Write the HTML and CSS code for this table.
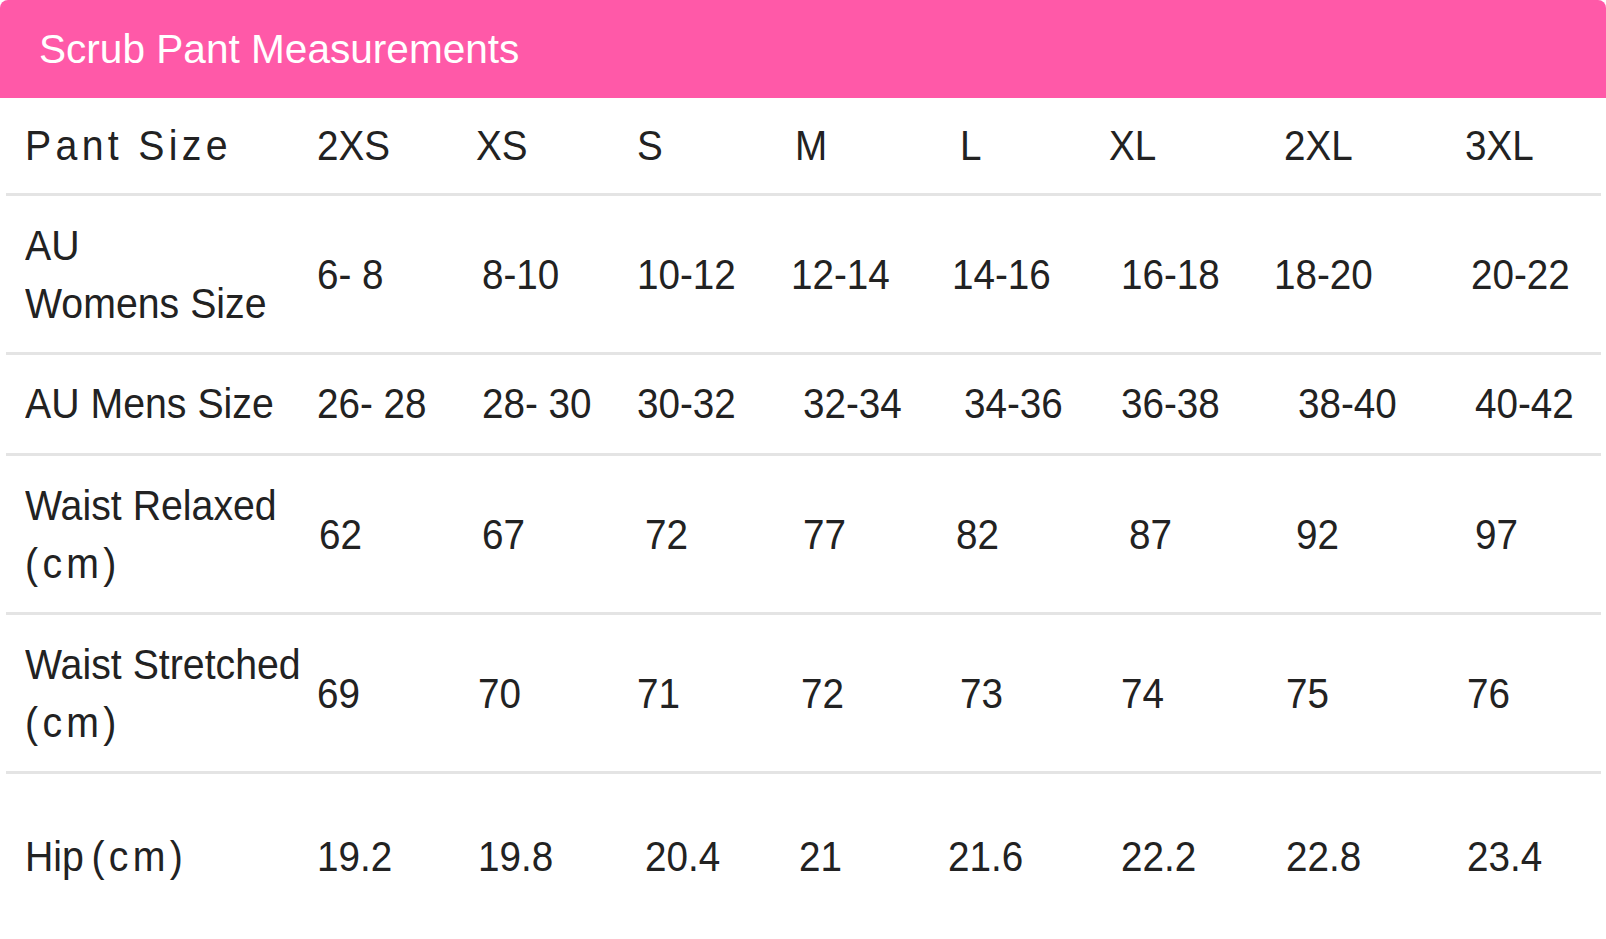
FILE: index.html
```html
<!DOCTYPE html>
<html lang="en">
<head>
<meta charset="utf-8">
<title>Scrub Pant Measurements</title>
<link rel="stylesheet" href="styles.css">
</head>
<body>
<div class="card">
  <div class="title">Scrub Pant Measurements</div>
  <div class="tbl">
    <div class="row head">
      <div class="lab"><span class="t ls">Pant Size</span></div>
      <div class="c"><span class="t">2XS</span></div>
      <div class="c"><span class="t n2">XS</span></div>
      <div class="c"><span class="t">S</span></div>
      <div class="c"><span class="t">M</span></div>
      <div class="c"><span class="t m4">L</span></div>
      <div class="c"><span class="t n2">XL</span></div>
      <div class="c"><span class="t n2">2XL</span></div>
      <div class="c"><span class="t n2">3XL</span></div>
    </div>
    <div class="row two">
      <div class="lab"><span class="t">AU<br>Womens Size</span></div>
      <div class="c"><span class="t">6- 8</span></div>
      <div class="c"><span class="t m4">8-10</span></div>
      <div class="c"><span class="t">10-12</span></div>
      <div class="c"><span class="t n4">12-14</span></div>
      <div class="c"><span class="t n4">14-16</span></div>
      <div class="c"><span class="t m10">16-18</span></div>
      <div class="c"><span class="t n12">18-20</span></div>
      <div class="c"><span class="t m4">20-22</span></div>
    </div>
    <div class="row">
      <div class="lab"><span class="t">AU Mens Size</span></div>
      <div class="c"><span class="t">26- 28</span></div>
      <div class="c"><span class="t m4">28- 30</span></div>
      <div class="c"><span class="t">30-32</span></div>
      <div class="c"><span class="t m8">32-34</span></div>
      <div class="c"><span class="t m8">34-36</span></div>
      <div class="c"><span class="t m10">36-38</span></div>
      <div class="c"><span class="t m12">38-40</span></div>
      <div class="c"><span class="t m8">40-42</span></div>
    </div>
    <div class="row two">
      <div class="lab"><span class="t">Waist Relaxed<br><span class="ls">(cm)</span></span></div>
      <div class="c"><span class="t m2">62</span></div>
      <div class="c"><span class="t m4">67</span></div>
      <div class="c"><span class="t m8">72</span></div>
      <div class="c"><span class="t m8">77</span></div>
      <div class="c"><span class="t">82</span></div>
      <div class="c"><span class="t m18">87</span></div>
      <div class="c"><span class="t m10">92</span></div>
      <div class="c"><span class="t m8">97</span></div>
    </div>
    <div class="row two">
      <div class="lab"><span class="t">Waist Stretched<br><span class="ls">(cm)</span></span></div>
      <div class="c"><span class="t">69</span></div>
      <div class="c"><span class="t">70</span></div>
      <div class="c"><span class="t">71</span></div>
      <div class="c"><span class="t m6">72</span></div>
      <div class="c"><span class="t m4">73</span></div>
      <div class="c"><span class="t m10">74</span></div>
      <div class="c"><span class="t">75</span></div>
      <div class="c"><span class="t">76</span></div>
    </div>
    <div class="row hip">
      <div class="lab"><span class="t">Hip<span class="ls gap">(cm)</span></span></div>
      <div class="c"><span class="t">19.2</span></div>
      <div class="c"><span class="t">19.8</span></div>
      <div class="c"><span class="t m8">20.4</span></div>
      <div class="c"><span class="t m4">21</span></div>
      <div class="c"><span class="t n8">21.6</span></div>
      <div class="c"><span class="t m10">22.2</span></div>
      <div class="c"><span class="t">22.8</span></div>
      <div class="c"><span class="t">23.4</span></div>
    </div>
  </div>
</div>
</body>
</html>
```
FILE: styles.css
```css
html, body {
  margin: 0;
  padding: 0;
  background: #ffffff;
}

body {
  font-family: "Liberation Sans", Arial, sans-serif;
  color: #222222;
}

.card {
  width: 1606px;
}

.title {
  height: 98px;
  background: #ff59a8;
  border-radius: 8px 8px 0 0;
  display: flex;
  align-items: center;
  padding-left: 39px;
  color: #ffffff;
  font-size: 40.6px;
}

.tbl {
  margin: 0 5px 0 6px;
}

.row {
  display: grid;
  grid-template-columns: 311px 161px 159px 158px 161px 155px 175px 181px 134px;
  align-items: center;
  padding: 20px 0;
  border-bottom: 3px solid #e4e4e4;
  font-size: 42px;
  line-height: 58px;
}

.row.head {
  padding: 19px 0 18px;
}

.row.two {
  padding: 21px 0 19px;
}

.row.hip {
  padding: 54px 0 50px;
  border-bottom: 0;
}

.lab {
  padding-left: 19px;
}

.t {
  display: inline-block;
  white-space: nowrap;
  transform: scaleX(0.92);
  transform-origin: 0 50%;
}

.lab .t {
  transform: scaleX(0.935);
}

.ls {
  letter-spacing: 4.6px;
}

.gap {
  display: inline-block;
  margin-left: 8px;
}

.m2 { margin-left: 2px; }
.m4 { margin-left: 4px; }
.m6 { margin-left: 6px; }
.m8 { margin-left: 8px; }
.m10 { margin-left: 10px; }
.m12 { margin-left: 12px; }
.m18 { margin-left: 18px; }
.n2 { margin-left: -2px; }
.n4 { margin-left: -4px; }
.n8 { margin-left: -8px; }
.n12 { margin-left: -12px; }
```
